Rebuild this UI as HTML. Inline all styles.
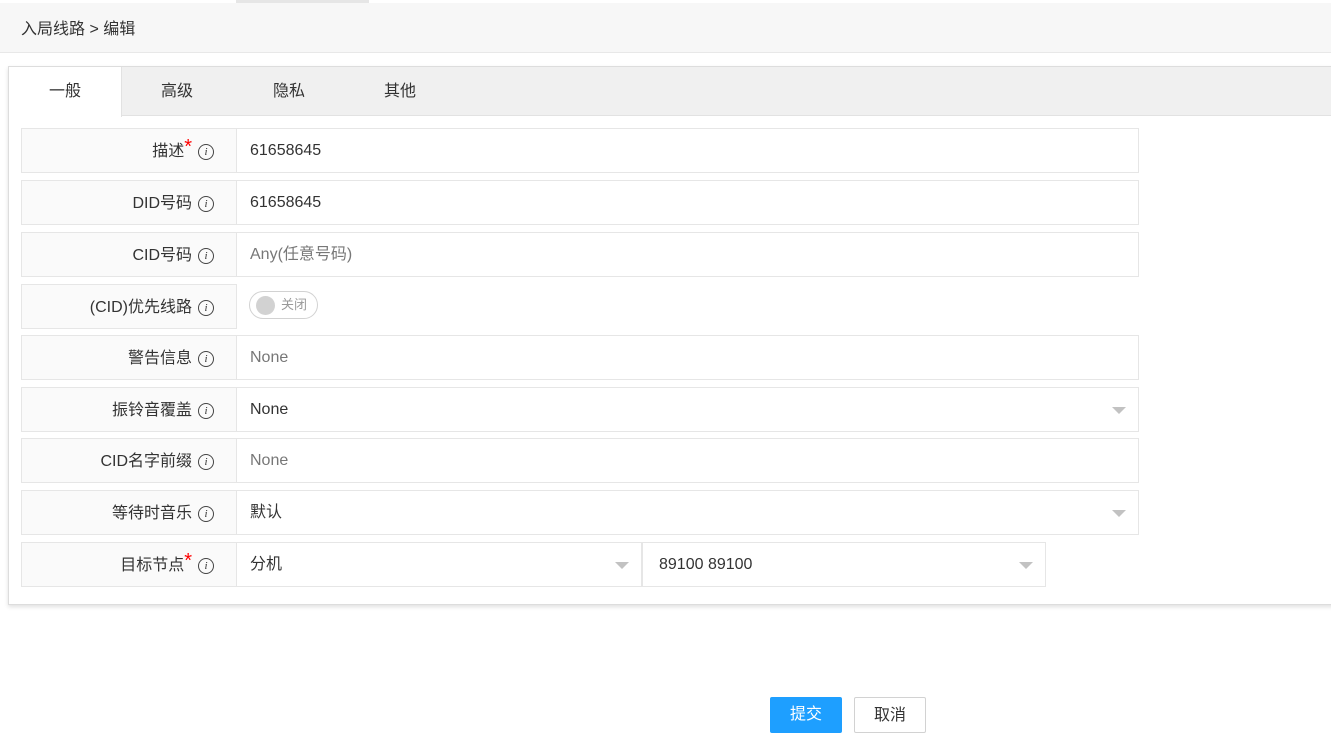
<!DOCTYPE html>
<html><head><meta charset="utf-8"><style>
*{box-sizing:border-box;margin:0;padding:0}
body{width:1331px;height:734px;background:#fff;font-family:"Liberation Sans","Noto Sans CJK SC",sans-serif;font-size:16px;color:#333;position:relative;overflow:hidden}
.abs{position:absolute}
.hdr{left:0;top:3px;width:1331px;height:50px;background:#f7f7f7;border-bottom:1px solid #e8e8e8}
.hdr span{position:absolute;left:21px;top:12px;font-size:16px;color:#333}
.panel{left:8px;top:66px;width:1330px;height:539px;border:1px solid #ddd;box-shadow:0 2px 4px rgba(0,0,0,.12);background:#fff}
.tabs{left:9px;top:67px;width:1322px;height:49px;background:#f0f0f0;border-bottom:1px solid #e2e2e2}
.tab{position:absolute;top:0;height:49px;line-height:49px;text-align:center;font-size:16px;color:#333}
.tab.on{background:#fff;border-right:1px solid #e2e2e2;height:50px}
.lab{left:21px;width:216px;height:45px;background:#fafafa;border:1px solid #e6e6e6;text-align:right;padding-right:22px;line-height:46px;font-size:16px;color:#333}
.lab .i{position:absolute;right:22px;top:15px;width:16px;height:16px;border:1px solid #444;border-radius:50%;font:italic 11px/14px "Liberation Serif",serif;text-align:center;color:#333}
.lab .t{margin-right:22px}
.star{color:#f00;position:relative;top:-3px;font-size:20px;line-height:10px}
.inp{left:237px;width:902px;height:45px;border:1px solid #e6e6e6;border-left:none;line-height:44px;padding-left:13px;font-size:16px;color:#333}
.ph{color:#777}
.arr{position:absolute;right:12px;top:19px;width:0;height:0;border-left:7px solid transparent;border-right:7px solid transparent;border-top:7px solid #c2c2c2}
.btn{top:697px;height:36px;line-height:36px;text-align:center;font-size:16px;border-radius:2px}
</style></head><body>
<div class="abs" style="left:236px;top:0;width:133px;height:3px;background:#e6e6e6"></div>
<div class="abs hdr"><span>入局线路 &gt; 编辑</span></div>
<div class="abs panel"></div>
<div class="abs tabs">
<div class="tab on" style="left:0;width:113px">一般</div>
<div class="tab" style="left:113px;width:110px">高级</div>
<div class="tab" style="left:225px;width:110px">隐私</div>
<div class="tab" style="left:336px;width:110px">其他</div>
</div>

<div class="abs lab" style="top:128px"><span class="t">描述<span class="star">*</span></span><span class="i">i</span></div>
<div class="abs inp" style="top:128px">61658645</div>

<div class="abs lab" style="top:180px"><span class="t">DID号码</span><span class="i">i</span></div>
<div class="abs inp" style="top:180px">61658645</div>

<div class="abs lab" style="top:232px"><span class="t">CID号码</span><span class="i">i</span></div>
<div class="abs inp ph" style="top:232px">Any(任意号码)</div>

<div class="abs lab" style="top:284px"><span class="t">(CID)优先线路</span><span class="i">i</span></div>
<div class="abs" style="left:249px;top:291px;width:69px;height:28px;border:1px solid #d2d2d2;border-radius:14px;font-size:13px;color:#999;line-height:26px;padding-left:31px">关闭<div class="abs" style="left:6px;top:4px;width:19px;height:19px;border-radius:50%;background:#d2d2d2"></div></div>

<div class="abs lab" style="top:335px"><span class="t">警告信息</span><span class="i">i</span></div>
<div class="abs inp ph" style="top:335px">None</div>

<div class="abs lab" style="top:387px"><span class="t">振铃音覆盖</span><span class="i">i</span></div>
<div class="abs inp" style="top:387px">None<span class="arr"></span></div>

<div class="abs lab" style="top:438px"><span class="t">CID名字前缀</span><span class="i">i</span></div>
<div class="abs inp ph" style="top:438px">None</div>

<div class="abs lab" style="top:490px"><span class="t">等待时音乐</span><span class="i">i</span></div>
<div class="abs inp" style="top:490px">默认<span class="arr"></span></div>

<div class="abs lab" style="top:542px"><span class="t">目标节点<span class="star">*</span></span><span class="i">i</span></div>
<div class="abs inp" style="top:542px;width:405px">分机<span class="arr"></span></div>
<div class="abs inp" style="top:542px;left:642px;width:404px;border-left:1px solid #e6e6e6;padding-left:16px">89100 89100<span class="arr"></span></div>

<div class="abs btn" style="left:770px;width:72px;background:#1e9fff;color:#fff">提交</div>
<div class="abs btn" style="left:854px;width:72px;border:1px solid #d2d2d2;color:#333">取消</div>
</body></html>
